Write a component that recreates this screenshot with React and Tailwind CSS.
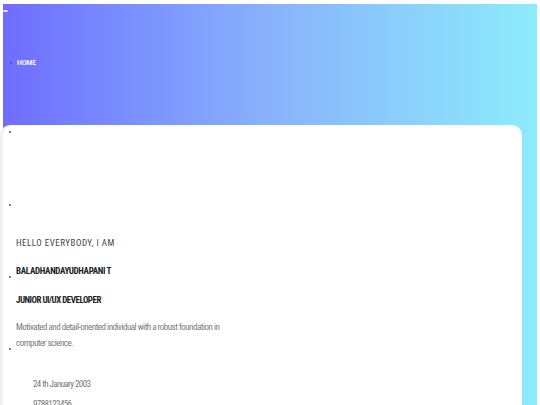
import React from 'react';

const font = { fontFamily: '"Liberation Sans Narrow", "Roboto Condensed", Roboto, sans-serif' };

function Dot({ className = '' }) {
  return <span className={`block w-[2px] h-[2px] rounded-full bg-[#555] ${className}`} />;
}

export default function App() {
  return (
    <div className="w-[540px] h-[405px] overflow-hidden bg-white pt-[4px] pl-[3px] pr-[3px]" style={font}>
      <div className="h-full bg-linear-to-r from-[#6f6cfe] via-[#89b2fb] to-[#8cecfb] flex flex-col">
        {/* Hero */}
        <div className="h-[121px] relative shrink-0">
          <span className="absolute left-0 top-[6px] w-[5px] h-[2px] bg-white/80 rounded-sm" />
          <ul className="pt-[53px] pl-[7px]">
            <li className="flex items-center gap-[5px] text-[8px] font-medium text-white tracking-tight">
              <Dot className="bg-[#6a5fd8]" />
              HOME
            </li>
          </ul>
        </div>

        {/* Card */}
        <div className="flex-1 mr-[15px] bg-white rounded-t-[10px] flex shadow-[-3px_0_0_#f1f1f3]">
          <div className="w-[13px] shrink-0 pl-[6px]">
            <Dot className="mt-[6px]" />
            <Dot className="mt-[71px]" />
            <Dot className="mt-[70px]" />
            <Dot className="mt-[70px]" />
          </div>
          <div className="pt-[112px] text-[#333]">
            <p className="text-[9px] tracking-[0.5px] text-[#444] leading-[12px]">HELLO EVERYBODY, I AM</p>
            <p className="mt-[16px] text-[9px] font-bold text-[#222] leading-[12px] tracking-[-0.3px]">BALADHANDAYUDHAPANI T</p>
            <p className="mt-[17px] text-[9px] font-bold text-[#222] leading-[12px] tracking-[-0.5px]">JUNIOR UI/UX DEVELOPER</p>
            <p className="mt-[13px] w-[206px] text-[9px] text-[#7a7a7a] leading-[16px] tracking-[-0.5px]">
              Motivated and detail-oriented individual with a robust foundation in computer science.
            </p>
            <ul className="mt-[23px] pl-[17px] text-[9px] text-[#777] leading-[20px] tracking-[-0.6px]">
              <li>24 th January 2003</li>
              <li>9788123456</li>
            </ul>
          </div>
        </div>
      </div>
    </div>
  );
}
